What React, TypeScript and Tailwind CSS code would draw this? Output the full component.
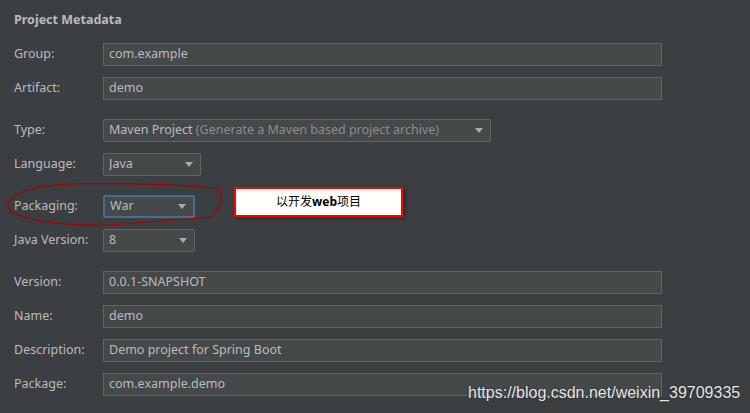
import React from 'react'

const font = { fontFamily: '"Noto Sans", "Noto Sans CJK SC", sans-serif' }

function Caret() {
  return (
    <svg width="8" height="5" viewBox="0 0 8 5" className="shrink-0">
      <path d="M0 0 H8 L4 5 Z" fill="#a9adb0" />
    </svg>
  )
}

function Row({ label, children }: { label: string; children: React.ReactNode }) {
  return (
    <div className="flex items-center h-[23px]">
      <div className="w-[89px] text-[12.5px] text-[#bbbbbb]">{label}</div>
      {children}
    </div>
  )
}

function Field({ value }: { value: string }) {
  return (
    <div className="w-[559px] h-[23px] flex items-center px-[5px] bg-[#45494a] border border-[#646464] text-[12.5px] text-[#bbbbbb]">
      {value}
    </div>
  )
}

function Select({ width, children, focused }: { width: string; children: React.ReactNode; focused?: boolean }) {
  return (
    <div
      className={`${width} h-[23px] flex items-center justify-between pl-[5px] pr-[7px] bg-[#45494a] text-[12.5px] text-[#bbbbbb] rounded-[2px] ${
        focused ? 'border-2 border-[#466d94] pl-[4px] pr-[6px]' : 'border border-[#646464]'
      }`}
    >
      <span className="truncate">{children}</span>
      <Caret />
    </div>
  )
}

export default function App() {
  return (
    <div className="relative w-[750px] h-[413px] bg-[#3c3f41] overflow-hidden" style={font}>
      <div className="pl-[14px] pt-[10px]">
        <div className="text-[12.5px] font-bold text-[#bbbbbb] h-[20px] leading-[20px]">Project Metadata</div>

        <div className="mt-[13px] flex flex-col gap-[11px]">
          <Row label="Group:"><Field value="com.example" /></Row>
          <Row label="Artifact:"><Field value="demo" /></Row>
        </div>

        <div className="mt-[19px] flex flex-col gap-[11px]">
          <Row label="Type:">
            <Select width="w-[388px]">
              Maven Project <span className="text-[#8c8c8c]">(Generate a Maven based project archive)</span>
            </Select>
          </Row>
          <Row label="Language:"><Select width="w-[98px]">Java</Select></Row>
        </div>

        <div className="mt-[19px] flex flex-col gap-[11px]">
          <Row label="Packaging:"><Select width="w-[92px]" focused>War</Select></Row>
          <Row label="Java Version:"><Select width="w-[92px]">8</Select></Row>
        </div>

        <div className="mt-[19px] flex flex-col gap-[11px]">
          <Row label="Version:"><Field value="0.0.1-SNAPSHOT" /></Row>
          <Row label="Name:"><Field value="demo" /></Row>
          <Row label="Description:"><Field value="Demo project for Spring Boot" /></Row>
          <Row label="Package:"><Field value="com.example.demo" /></Row>
        </div>
      </div>

      {/* hand-drawn annotation ring */}
      <svg className="absolute left-0 top-0 pointer-events-none" width="750" height="413">
        <path
          d="M8 205 C10 192 40 185 70 184 C120 183 180 185 218 188 C224 192 220 210 213 217 C190 219 150 222 110 225 C70 226 30 222 12 212 C8 209 7 207 8 205"
          fill="none"
          stroke="#a80000"
          strokeWidth="1.2"
        />
      </svg>

      {/* callout */}
      <div className="absolute left-[234px] top-[187px] w-[169px] h-[30px] bg-[#fffffc] border-2 border-[#ff0000] shadow-[2px_2px_4px_rgba(0,0,0,0.35)] flex items-center justify-center text-[12px] text-black">
        <span>以开发<b>web</b>项目</span>
      </div>

      {/* watermark */}
      <div
        className="absolute left-[468px] top-[383px] text-[16px] text-[#e6e6e6] leading-[20px] [text-shadow:0_0_2px_rgba(0,0,0,0.6)]"
        style={{ fontFamily: '"Liberation Sans", Arial, sans-serif' }}
      >
        https://blog.csdn.net/weixin_39709335
      </div>
    </div>
  )
}
